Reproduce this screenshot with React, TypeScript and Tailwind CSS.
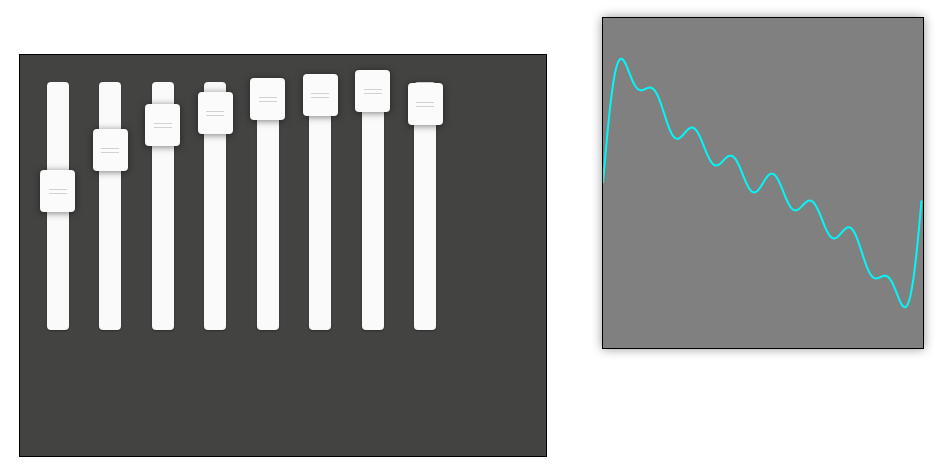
import React from 'react'

const TRACK_H = 248
const KNOB_H = 42

// knob offsets (px from track top), one per harmonic
const knobs = [88, 47, 22, 10.3, -3.7, -7.7, -11.7, 1.3]

// each fader sets the amplitude of one sine harmonic
function buildPath(tops: number[]) {
  const w = 320
  const mid = 165
  const gain = 161
  const amps = tops.map(t => (t + KNOB_H / 2) / TRACK_H)
  const pts: string[] = []
  for (let i = 0; i <= 318.6 * 2; i++) {
    const px = i / 2
    const x = (px / w) * Math.PI * 2
    let s = 0
    amps.forEach((a, k) => { s += a * Math.sin((k + 1) * x) })
    pts.push(`${i === 0 ? 'M' : 'L'}${px.toFixed(2)},${(mid - gain * s).toFixed(2)}`)
  }
  return pts.join(' ')
}

function Fader({ top }: { top: number }) {
  return (
    <div className="relative w-[35px] h-[248px] flex justify-center">
      <div className="w-[22px] h-full rounded-[4px] bg-[#fafafa] shadow-[0_1px_2px_rgba(0,0,0,0.35)]" />
      <div
        className="absolute left-0 w-[35px] h-[42px] rounded-[4px] bg-[#fbfbfb] shadow-[0_1px_7px_rgba(0,0,0,0.5)] flex flex-col items-center justify-center gap-[3px]"
        style={{ top }}
      >
        <div className="w-[18px] h-px bg-[#d2d2d2]" />
        <div className="w-[18px] h-px bg-[#d2d2d2]" />
      </div>
    </div>
  )
}

export default function App() {
  const d = buildPath(knobs)
  return (
    <div className="w-[945px] h-[471px] bg-white flex items-start overflow-hidden">
      <div className="ml-[19px] mt-[54px] w-[528px] h-[403px] border border-black bg-[#434442] pl-[20px] pt-[27px] flex items-start gap-[17.5px]">
        {knobs.map((t, i) => (
          <Fader key={i} top={t} />
        ))}
      </div>
      <div className="ml-[55px] mt-[17px] w-[322px] h-[332px] border border-black bg-[#808080] shadow-[0_0_10px_rgba(0,0,0,0.4)]">
        <svg width="320" height="330" viewBox="0 0 320 330" className="block">
          <path d={d} fill="none" stroke="#00f8f8" strokeWidth="2" strokeLinejoin="round" />
        </svg>
      </div>
    </div>
  )
}
